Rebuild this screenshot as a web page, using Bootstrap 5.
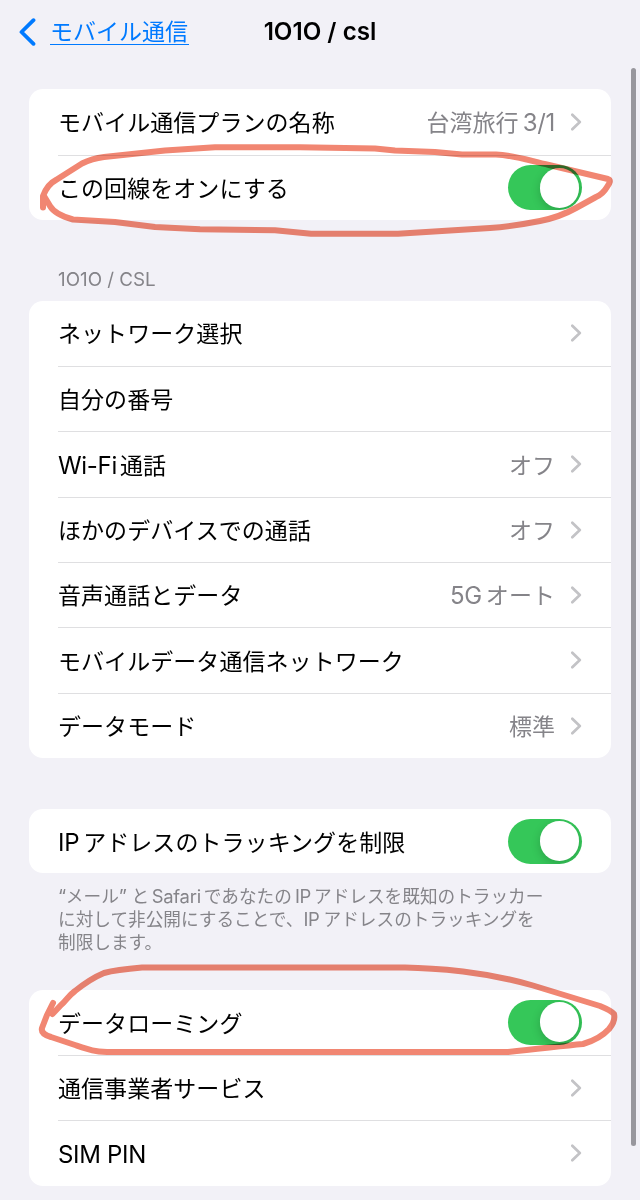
<!DOCTYPE html>
<html lang="ja">
<head>
<meta charset="utf-8">
<meta name="viewport" content="width=device-width, initial-scale=1">
<title>1O1O / csl</title>
<link rel="stylesheet" href="https://cdn.jsdelivr.net/npm/bootstrap@5.3.0/dist/css/bootstrap.min.css">
<style>
  html { overflow: hidden; }
  body { width: 640px; height: 1200px; overflow: hidden; background: #f2f1f7; color: #000;
         font-family: Inter, "Noto Sans CJK JP", sans-serif; font-size: 23px; line-height: 34px; }
  .topbar { height: 63px; margin-bottom: 26.3px; }
  .back-link { position: absolute; left: 19px; top: 0; height: 63px; color: #007aff; }
  .back-link u { text-decoration: none; border-bottom: 1.5px solid #007aff; line-height: 26px; height: 26px; margin-left: 13px; padding-right: 1px; }
  .page-title { font-size: 24.2px; font-weight: 600; }
  .group { margin: 0 29.3px; border: 0; border-radius: 14px; background: #fff; overflow: hidden; }
  .item { height: 65.36px; padding: 0 29.2px 0 0; margin-left: 28.7px; border-top: 1px solid #dfdfe1; white-space: nowrap; }
  .item:first-child { border-top: 0; }
  .item .name, .val { padding-top: 2.5px; letter-spacing: .06px; }
  .item .lat { font-size: 24px; letter-spacing: -.3px; }
  .val { color: #858489; margin-right: 15.5px; }
  .chev { width: 11px; height: 18px; fill: none; stroke: #c3c3c6; stroke-width: 2.7; stroke-linecap: round; stroke-linejoin: round; }
  .toggle { width: 74.5px; height: 45px; margin-right: -.6px; border-radius: 23px; background: #35c759; padding: 2.7px; overflow: hidden; }
  .toggle i { width: 39.6px; height: 39.6px; border-radius: 50%; background: #fff; box-shadow: 0 3px 10px rgba(0,0,0,.18); }
  .caption { margin-left: 58px; color: #858489; font-size: 18.8px; line-height: 23.3px; white-space: nowrap; }
  .note { font-size: 17.65px; }
  .note .lat { font-size: 18.4px; letter-spacing: -.25px; }
  .gap-sm { margin-right: 3px; }
  .scroll-thumb { position: absolute; left: 631px; top: 68px; width: 5px; height: 1078px; border-radius: 3px; background: #98979d; }
  .ink { position: absolute; left: 0; top: 0; mix-blend-mode: multiply; pointer-events: none; fill: none; stroke: #f18672;
         stroke-width: 6; stroke-linecap: round; stroke-linejoin: round; }
</style>
</head>
<body class="position-relative">
<header class="topbar position-relative d-flex justify-content-center align-items-center">
  <a class="back-link d-flex align-items-center text-decoration-none" href="#">
    <svg width="18" height="28" viewBox="0 0 18 28" fill="none" stroke="#007aff" stroke-width="3.8" stroke-linecap="round" stroke-linejoin="round"><path d="M14.5 2.2 2.5 14l12 11.8"/></svg>
    <u class="d-block">モバイル通信</u>
  </a>
  <span class="page-title">1O1O / csl</span>
</header>

<main>
  <section class="group card">
    <div class="item d-flex align-items-center"><span class="name me-auto">モバイル通信プランの名称</span><span class="val">台湾旅行<span class="lat ms-1">3/1</span></span><svg class="chev" viewBox="0 0 11 18"><path d="M1.3 1.7 8.8 9l-7.5 7.3"/></svg></div>
    <div class="item d-flex align-items-center"><span class="name me-auto">この回線をオンにする</span><span class="toggle d-flex justify-content-end"><i></i></span></div>
  </section>

  <div class="caption" style="margin-top:48px;margin-bottom:9.2px">1O1O / CSL</div>

  <section class="group card">
    <div class="item d-flex align-items-center"><span class="name me-auto">ネットワーク選択</span><svg class="chev" viewBox="0 0 11 18"><path d="M1.3 1.7 8.8 9l-7.5 7.3"/></svg></div>
    <div class="item d-flex align-items-center"><span class="name me-auto">自分の番号</span></div>
    <div class="item d-flex align-items-center"><span class="name me-auto"><span class="lat gap-sm">Wi-Fi</span>通話</span><span class="val">オフ</span><svg class="chev" viewBox="0 0 11 18"><path d="M1.3 1.7 8.8 9l-7.5 7.3"/></svg></div>
    <div class="item d-flex align-items-center"><span class="name me-auto">ほかのデバイスでの通話</span><span class="val">オフ</span><svg class="chev" viewBox="0 0 11 18"><path d="M1.3 1.7 8.8 9l-7.5 7.3"/></svg></div>
    <div class="item d-flex align-items-center"><span class="name me-auto">音声通話とデータ</span><span class="val"><span class="lat me-1">5G</span>オート</span><svg class="chev" viewBox="0 0 11 18"><path d="M1.3 1.7 8.8 9l-7.5 7.3"/></svg></div>
    <div class="item d-flex align-items-center"><span class="name me-auto">モバイルデータ通信ネットワーク</span><svg class="chev" viewBox="0 0 11 18"><path d="M1.3 1.7 8.8 9l-7.5 7.3"/></svg></div>
    <div class="item d-flex align-items-center"><span class="name me-auto">データモード</span><span class="val">標準</span><svg class="chev" viewBox="0 0 11 18"><path d="M1.3 1.7 8.8 9l-7.5 7.3"/></svg></div>
  </section>

  <section class="group card" style="margin-top:51.3px">
    <div class="item d-flex align-items-center" style="height:63.9px"><span class="name me-auto"><span class="lat me-1">IP</span>アドレスのトラッキングを制限</span><span class="toggle d-flex justify-content-end"><i></i></span></div>
  </section>

  <div class="caption note" style="margin-top:11.5px;margin-bottom:35px">
    <div><span class="lat">“</span>メール<span class="lat">” </span>と<span class="lat gap-sm" style="margin-left:2.5px">Safari</span>であなたの<span class="lat gap-sm" style="margin-left:3px">IP</span>アドレスを既知のトラッカー</div>
    <div>に対して非公開にすることで、<span class="lat me-1">IP</span>アドレスのトラッキングを</div>
    <div>制限します。</div>
  </div>

  <section class="group card">
    <div class="item d-flex align-items-center"><span class="name me-auto">データローミング</span><span class="toggle d-flex justify-content-end"><i></i></span></div>
    <div class="item d-flex align-items-center"><span class="name me-auto">通信事業者サービス</span><svg class="chev" viewBox="0 0 11 18"><path d="M1.3 1.7 8.8 9l-7.5 7.3"/></svg></div>
    <div class="item d-flex align-items-center"><span class="name me-auto"><span class="lat">SIM PIN</span></span><svg class="chev" viewBox="0 0 11 18"><path d="M1.3 1.7 8.8 9l-7.5 7.3"/></svg></div>
  </section>
</main>

<div class="scroll-thumb"></div>

<!-- Hand-drawn highlighter loops around the two switches -->
<svg class="ink" width="640" height="1200" viewBox="0 0 640 1200">
  <path d="M43 207.500V196C46 188 50 183 56 180L82 163.500C90 159.500 96 158 104 157L165 150.500 215 147.300H300L375 148.500 395 150.500 435 152 462 154.500H496C516 155.500 530 161 549 165L608 179C611 180 610 183 607 187Q603 194 596 197L576 208Q560 217 540 221 515 226 490 228L398 233.700H311L275 230.200 200 229.200 155 227 115 222 73 219.500C64 217 54 213 50 206L44 196"/>
  <path d="M53 1003 47 1015 42 1028C41 1032 44 1035 51 1037L75 1045C90 1050 94 1051.500 107 1052H508C540 1049 560 1046 583 1044Q600 1039 609 1029C614 1023 615 1018 614 1014Q612 1011 600 1006L533 985.500Q500 976 463 971.500 430 968 405 967.600H142C125 969 115 970 104 973 92 978 85 983 75 991 67 997 67 1000 61 1005L52.500 1014"/>
</svg>
<script src="https://cdn.jsdelivr.net/npm/bootstrap@5.3.0/dist/js/bootstrap.bundle.min.js"></script>
</body>
</html>
